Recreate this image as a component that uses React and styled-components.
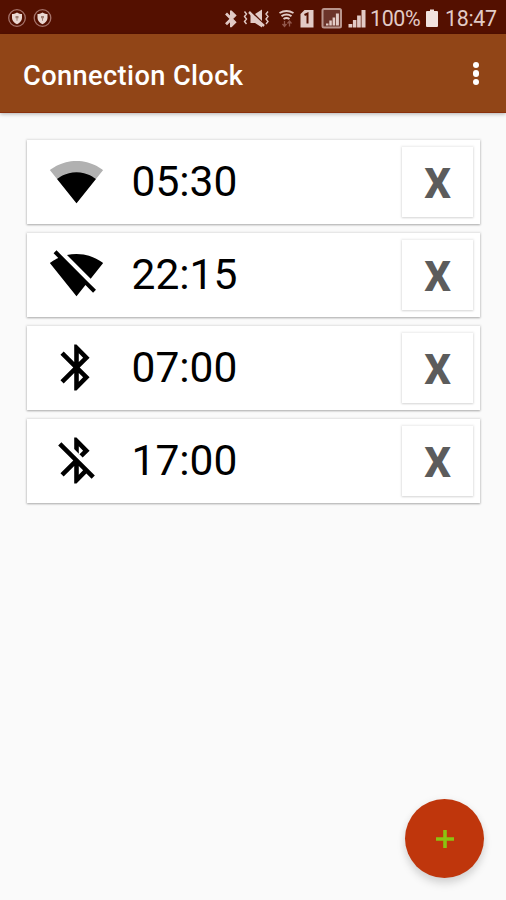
import React from "react";
import styled, { createGlobalStyle } from "styled-components";

const GlobalStyle = createGlobalStyle`
  * { box-sizing: border-box; }
  body { margin: 0; background: #fafafa; font-family: Roboto, sans-serif; }
`;

const Screen = styled.div`
  width: 506px;
  height: 900px;
  display: flex;
  flex-direction: column;
  background: #fafafa;
  overflow: hidden;
`;

const StatusBar = styled.div`
  flex: none;
  height: 34px;
  padding: 3px 8px 0 8px;
  display: flex;
  align-items: center;
  justify-content: space-between;
  background: #541000;
  color: #e2cbc6;
`;

const StatusIcons = styled.svg`
  display: block;
  flex: none;
`;

const StatusGroup = styled.div`
  display: flex;
  align-items: center;
`;

const StatusText = styled.span`
  width: ${(p) => p.$width}px;
  font-size: 21.4px;
  line-height: 30px;
  letter-spacing: ${(p) => p.$spacing}px;
  white-space: nowrap;
`;

const AppBar = styled.header`
  flex: none;
  height: 79px;
  padding: 0 21px 0 23px;
  display: flex;
  align-items: center;
  justify-content: space-between;
  background: #914517;
  border-bottom: 1px solid #8a300c;
  box-shadow: 0 1px 4px rgba(0, 0, 0, 0.3);
`;

const Title = styled.h1`
  margin: 0;
  padding-top: 5px;
  color: #fff;
  font-size: 27.2px;
  font-weight: 500;
  line-height: 32px;
  letter-spacing: 0.4px;
  white-space: nowrap;
`;

const MenuButton = styled.button`
  display: flex;
  flex-direction: column;
  gap: 2px;
  padding: 1px 6px 0 0;
  border: 0;
  background: none;
`;

const Dot = styled.span`
  width: 6.5px;
  height: 6.5px;
  border-radius: 50%;
  background: #fff;
`;

const AlarmList = styled.main`
  flex: 1;
  padding: 27px 26px 0 27px;
  display: flex;
  flex-direction: column;
  gap: 9px;
`;

const AlarmCard = styled.section`
  height: 84px;
  padding: 0 7px 0 22px;
  display: flex;
  align-items: center;
  background: #fff;
  box-shadow: 0 1px 2px rgba(0, 0, 0, 0.26), 0 0 2px 1px rgba(0, 0, 0, 0.09);
`;

const AlarmIcon = styled.svg`
  display: block;
  flex: none;
  width: 55px;
  height: 55px;
  margin-top: -1px;
`;

const Time = styled.div`
  flex: 1;
  height: 61px;
  padding-left: 27.5px;
  font-size: 42.5px;
  line-height: 60px;
  color: #000;
`;

const DeleteButton = styled.button`
  width: 71px;
  height: 70px;
  padding: 4px 0 0;
  border: 0;
  display: flex;
  align-items: center;
  justify-content: center;
  background: #fff;
  box-shadow: 0 1px 2px rgba(0, 0, 0, 0.1), 0 0 2px 1px rgba(0, 0, 0, 0.08);
  font: 800 42px/60px Roboto, sans-serif;
  color: #5c5c5c;
`;

const AddButton = styled.button`
  align-self: flex-end;
  flex: none;
  width: 79px;
  height: 79px;
  margin: 0 22px 22px 0;
  padding: 0;
  border: 0;
  border-radius: 50%;
  display: flex;
  align-items: center;
  justify-content: center;
  background: #bf360c;
  box-shadow: 0 6px 9px rgba(0, 0, 0, 0.13), 0 1px 8px rgba(0, 0, 0, 0.06);
`;

const BLUETOOTH =
  "M17.71 7.71L12 2h-1v7.59L6.41 5 5 6.41 10.59 12 5 17.59 6.41 19 11 14.41V22h1l5.71-5.71-4.3-4.29 4.3-4.29zM13 5.83l1.88 1.88L13 9.59V5.83zm1.88 10.46L13 18.17v-3.76l1.88 1.88z";

const ICONS = {
  wifi: (
    <>
      <path fill="#b1b1b1" d="M12.01 21.49L23.64 7c-.45-.34-4.93-4-11.64-4C5.28 3 .81 6.66.36 7l11.63 14.49.01.01.01-.01z" />
      <path d="M3.53 10.95l8.46 10.54.01.01.01-.01 8.46-10.54C20.04 10.62 16.81 8 12 8c-4.81 0-8.04 2.62-8.47 2.95z" />
    </>
  ),
  wifiOff: (
    <path d="M23.64 7c-.45-.34-4.93-4-11.64-4-1.5 0-2.89.19-4.15.48L18.18 13.8 23.64 7zm-6.6 8.22L3.27 1.44 2 2.72l2.05 2.06C1.91 5.76.59 6.82.36 7l11.63 14.49.01.01.01-.01 3.9-4.86 3.32 3.32 1.27-1.27-3.46-3.46z" />
  ),
  bluetooth: <path d={BLUETOOTH} />,
  bluetoothOff: (
    <path d="M13 5.83l1.88 1.88-1.6 1.6 1.41 1.41 3.02-3.02L12 2h-1v5.03l2 2v-3.2zM5.41 4L4 5.41 10.59 12 5 17.59 6.41 19 11 14.41V22h1l4.29-4.29 2.3 2.29L20 18.59 5.41 4zM13 18.17v-3.76l1.88 1.88L13 18.17z" />
  ),
};

const ALARMS = [
  { icon: "wifi", time: "05:30" },
  { icon: "wifiOff", time: "22:15" },
  { icon: "bluetooth", time: "07:00" },
  { icon: "bluetoothOff", time: "17:00" },
];

function ShieldBadge({ x }) {
  return (
    <g transform={`translate(${x} 9)`}>
      <circle r="8.3" fill="none" stroke="#a5736a" strokeWidth="1.3" />
      <path d="M0-5.5C2-4 3.500-4 5-4V0C5 3 2.500 5 0 6.200C-2.500 5-5 3-5 0V-4C-3.500-4-2-4 0-5.500z" fill="#ead8d2" />
      <path d="M-1.500-2h3v2.200h-1v2.600h-1V.2h-1z" fill="#a08074" />
    </g>
  );
}

function NotificationIcons() {
  return (
    <StatusIcons width="46" height="20" viewBox="0 0 46 20">
      <ShieldBadge x={9} />
      <ShieldBadge x={34.5} />
    </StatusIcons>
  );
}

function SystemIcons() {
  return (
    <StatusIcons width="148" height="24" viewBox="221 6.500 148 24" fill="currentColor">
      <path d={BLUETOOTH} transform="translate(221 9) scale(.78)" stroke="currentColor" strokeWidth="1.500" />
      <g>
        <path d="M249.500 13.500h4.500l7-4.500v18l-7-4.500h-4.500z" />
        <path d="M248 9l15 15" stroke="#541000" strokeWidth="2" />
        <path d="M248 11.500l15 14" stroke="currentColor" strokeWidth="2.400" />
        <path d="M243.500 11l2 2.500-2 2.500 2 2.500-2 2.500 2 2.500M267 11l-2 2.500 2 2.500-2 2.500 2 2.500-2 2.500" fill="none" stroke="currentColor" strokeWidth="1.400" />
      </g>
      <g fill="none" stroke="currentColor" strokeWidth="2">
        <path d="M278.500 12.500q7-4 14 0M280.500 15.700q5-3.200 10 0M282.500 18.500q3-2 6 0" />
        <path d="M283.500 20.500v5M281.500 23.500l2 2.500 2-2.500M288.500 26v-5M286.500 23l2-2.500 2 2.500" stroke="#91584c" strokeWidth="1.300" />
      </g>
      <path d="M303.500 9.500H312.500V27H299.500V13.500z" />
      <path d="M303.500 14.500l3-1.500v10" fill="none" stroke="#541000" strokeWidth="2" />
      <rect x="321.500" y="8.500" width="18.500" height="18.500" rx="1.500" fill="#6b342a" stroke="#b9958d" strokeWidth="2" />
      <path d="M325 23h2.500v2H325zM328.300 20h2.500v5h-2.500zM331.600 17h2.500v8h-2.500zM334.900 13h3v12h-3z" />
      <path d="M347.500 23.500h3.800V27h-3.800zM351.900 19.500h3.500V27h-3.500zM356.100 15h3.700v12h-3.700zM360.500 9.500h4V27h-4z" />
    </StatusIcons>
  );
}

function BatteryIcon() {
  return (
    <StatusIcons width="20" height="20" viewBox="0 0 20 20">
      <path d="M5 .5h4V2h3q1 0 1 1v14q0 1-1 1H2q-1 0-1-1V3q0-1 1-1h3z" fill="#f1e3df" />
    </StatusIcons>
  );
}

export default function App() {
  return (
    <>
      <GlobalStyle />
      <Screen>
        <StatusBar>
          <NotificationIcons />
          <StatusGroup>
            <SystemIcons />
            <StatusText $width={55} $spacing={-0.35}>100%</StatusText>
            <BatteryIcon />
            <StatusText $width={53} $spacing={-0.3}>18:47</StatusText>
          </StatusGroup>
        </StatusBar>
        <AppBar>
          <Title>Connection Clock</Title>
          <MenuButton aria-label="More options">
            <Dot />
            <Dot />
            <Dot />
          </MenuButton>
        </AppBar>
        <AlarmList>
          {ALARMS.map((alarm) => (
            <AlarmCard key={alarm.time}>
              <AlarmIcon viewBox="0 0 24 24">{ICONS[alarm.icon]}</AlarmIcon>
              <Time>{alarm.time}</Time>
              <DeleteButton aria-label="Delete">X</DeleteButton>
            </AlarmCard>
          ))}
        </AlarmList>
        <AddButton aria-label="Add alarm">
          <StatusIcons width="20" height="20" viewBox="0 0 20 20">
            <path d="M10 1v18M1 10h18" stroke="#8bc311" strokeWidth="3.600" />
          </StatusIcons>
        </AddButton>
      </Screen>
    </>
  );
}
